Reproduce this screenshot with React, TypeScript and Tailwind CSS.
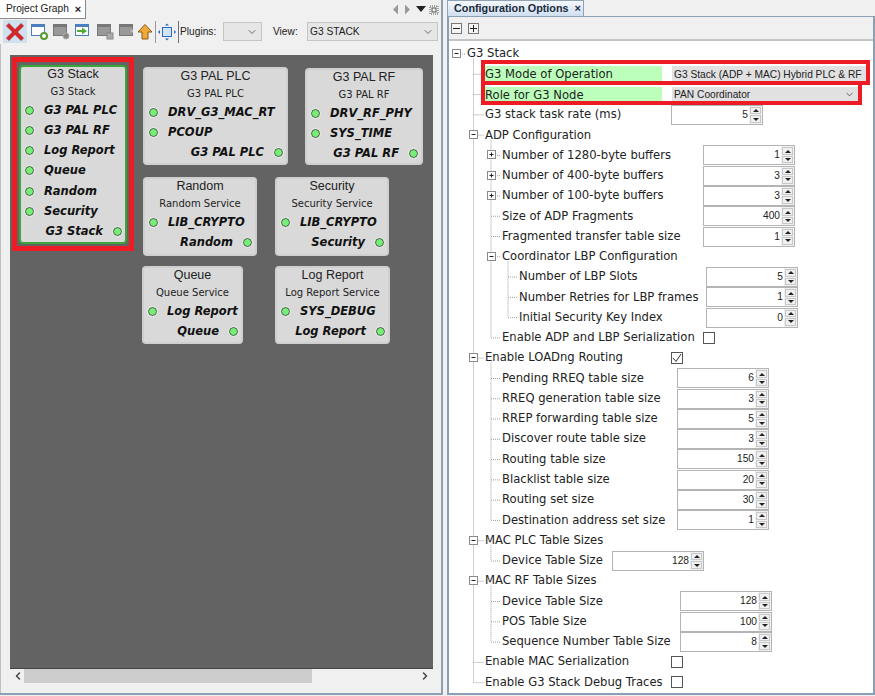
import { ChevronDown, ChevronLeft, ChevronRight } from "lucide-react";

const TREE_FONT = "font-['DejaVu_Sans',sans-serif] text-[11.6px] text-[#222]";
const WIN_FONT = "font-['Liberation_Sans',sans-serif] text-[10.2px] text-[#222]";

type Row = {
  label: string;
  level: 0 | 1 | 2 | 3;
  w?: string;
  spin?: string;
  check?: boolean;
  combo?: string;
  comboW?: string;
  highlight?: boolean;
};

const ROWS: Row[] = [
  { label: "G3 Stack", level: 0 },
  { label: "G3 Mode of Operation", level: 1, w: "w-[187px]", combo: "G3 Stack (ADP + MAC) Hybrid PLC & RF", comboW: "w-[194px]", highlight: true },
  { label: "Role for G3 Node", level: 1, w: "w-[187px]", combo: "PAN Coordinator", comboW: "w-[186px]", highlight: true },
  { label: "G3 stack task rate (ms)", level: 1, w: "w-[186px]", spin: "5" },
  { label: "ADP Configuration", level: 1 },
  { label: "Number of 1280-byte buffers", level: 2, w: "w-[201px]", spin: "1" },
  { label: "Number of 400-byte buffers", level: 2, w: "w-[201px]", spin: "3" },
  { label: "Number of 100-byte buffers", level: 2, w: "w-[201px]", spin: "3" },
  { label: "Size of ADP Fragments", level: 2, w: "w-[201px]", spin: "400" },
  { label: "Fragmented transfer table size", level: 2, w: "w-[201px]", spin: "1" },
  { label: "Coordinator LBP Configuration", level: 2 },
  { label: "Number of LBP Slots", level: 3, w: "w-[187px]", spin: "5" },
  { label: "Number Retries for LBP frames", level: 3, w: "w-[187px]", spin: "1" },
  { label: "Initial Security Key Index", level: 3, w: "w-[187px]", spin: "0" },
  { label: "Enable ADP and LBP Serialization", level: 2, w: "w-[201px]", check: false },
  { label: "Enable LOADng Routing", level: 1, w: "w-[186px]", check: true },
  { label: "Pending RREQ table size", level: 2, w: "w-[175px]", spin: "6" },
  { label: "RREQ generation table size", level: 2, w: "w-[175px]", spin: "3" },
  { label: "RREP forwarding table size", level: 2, w: "w-[175px]", spin: "5" },
  { label: "Discover route table size", level: 2, w: "w-[175px]", spin: "3" },
  { label: "Routing table size", level: 2, w: "w-[175px]", spin: "150" },
  { label: "Blacklist table size", level: 2, w: "w-[175px]", spin: "20" },
  { label: "Routing set size", level: 2, w: "w-[175px]", spin: "30" },
  { label: "Destination address set size", level: 2, w: "w-[175px]", spin: "1" },
  { label: "MAC PLC Table Sizes", level: 1 },
  { label: "Device Table Size", level: 2, w: "w-[110px]", spin: "128" },
  { label: "MAC RF Table Sizes", level: 1 },
  { label: "Device Table Size", level: 2, w: "w-[178px]", spin: "128" },
  { label: "POS Table Size", level: 2, w: "w-[178px]", spin: "100" },
  { label: "Sequence Number Table Size", level: 2, w: "w-[178px]", spin: "8" },
  { label: "Enable MAC Serialization", level: 1, w: "w-[186px]", check: false },
  { label: "Enable G3 Stack Debug Traces", level: 1, w: "w-[186px]", check: false },
];

const INDENT = { 0: "pl-[18px]", 1: "pl-[36px]", 2: "pl-[53px]", 3: "pl-[70px]" };

const rowY = (i: number) => 12.5 + i * 20.28;

function Spinner({ value }: { value: string }) {
  return (
    <div className="flex h-[20px] w-[92px] shrink-0 border border-[#b4b4b4] bg-white">
      <div className={`flex-1 pr-[1px] text-right leading-[18px] ${WIN_FONT}`}>{value}</div>
      <div className="flex w-[13px] flex-col gap-[1px] bg-[#f0f0f0] p-[1px]">
        <div className="flex flex-1 items-center justify-center border border-[#c8c8c8] bg-[#f0f0f0]">
          <div className="h-0 w-0 border-x-[3px] border-b-[3px] border-x-transparent border-b-[#222]" />
        </div>
        <div className="flex flex-1 items-center justify-center border border-[#c8c8c8] bg-[#f0f0f0]">
          <div className="h-0 w-0 border-x-[3px] border-t-[3px] border-x-transparent border-t-[#222]" />
        </div>
      </div>
    </div>
  );
}

function Check({ on }: { on: boolean }) {
  return (
    <div className="flex h-[12px] w-[12px] shrink-0 items-center justify-center border border-[#555] bg-white">
      {on && (
        <svg width="10" height="10" viewBox="0 0 10 10" fill="none">
          <path d="M1 5l3 3.5L9 1" stroke="#333" strokeWidth="1" />
        </svg>
      )}
    </div>
  );
}

function Combo({ text, w }: { text: string; w: string }) {
  return (
    <div className={`flex h-[16px] shrink-0 items-center justify-between bg-[#e1e1e1] pl-[2px] pr-[3px] ${w} ${WIN_FONT}`}>
      <span className="whitespace-nowrap">{text}</span>
      <ChevronDown size={11} strokeWidth={1.5} className="text-[#333]" />
    </div>
  );
}

// dotted connector lines and the +/- boxes of the tree
function TreeLines() {
  const verticals: [number, number, number][] = [
    [24.5, rowY(0) + 5, rowY(31)],
    [42, rowY(4) + 5, rowY(14)],
    [59, rowY(10) + 5, rowY(13)],
    [42, rowY(15) + 5, rowY(23)],
    [42, rowY(24) + 5, rowY(25)],
    [42, rowY(26) + 5, rowY(29)],
  ];
  const elbowX = { 0: 7, 1: 24.5, 2: 42, 3: 59 };
  const textX = { 0: 17, 1: 35, 2: 52, 3: 69 };
  const minus = [0, 4, 10, 15, 24, 26];
  const plus = [5, 6, 7];
  return (
    <svg className="pointer-events-none absolute left-0 top-0" width="120" height="660">
      {verticals.map(([x, a, b], i) => (
        <line key={i} x1={x} x2={x} y1={a} y2={b} stroke="#a0a0a0" strokeDasharray="1 1" />
      ))}
      {ROWS.map((r, i) => (
        <line key={i} x1={elbowX[r.level]} x2={textX[r.level]} y1={rowY(i) + 0.5} y2={rowY(i) + 0.5} stroke="#a0a0a0" strokeDasharray="1 1" />
      ))}
      {[...minus, ...plus].map((i) => {
        const x = Math.floor(elbowX[ROWS[i].level]) + 0.5;
        const y = Math.floor(rowY(i));
        return (
          <g key={i}>
            <rect x={x - 4} y={y - 3.5} width="8" height="8" fill="#fff" stroke="#8a8a8a" />
            <line x1={x - 2} x2={x + 2} y1={y + 0.5} y2={y + 0.5} stroke="#222" />
            {plus.includes(i) && <line x1={x} x2={x} y1={y - 1.5} y2={y + 2.5} stroke="#222" />}
          </g>
        );
      })}
    </svg>
  );
}

function ConfigPanel() {
  return (
    <div className="relative flex h-[695px] flex-1 flex-col">
      <div className="flex h-[16px] items-stretch">
        <div className="flex w-[137px] items-center gap-[6px] whitespace-nowrap border-x border-t border-[#8fa2b6] bg-gradient-to-b from-[#f4f8fc] to-[#cfdff0] pl-[6px] font-['Liberation_Sans',sans-serif] text-[10.8px] font-bold text-[#1a2a3a]">
          Configuration Options
          <span className="text-[11px] leading-none">×</span>
        </div>
      </div>
      <div className="flex flex-1 flex-col border-x-2 border-b-2 border-t border-[#8ca0b5]">
        <div className="flex h-[24px] items-center gap-[6px] border-b-2 border-[#c4c4c4] bg-[#f0f0f0] pl-[2px]">
          <div className="flex h-[11px] w-[11px] items-center justify-center border border-[#777] bg-[#f4f4f4]">
            <div className="h-[1px] w-[7px] bg-[#222]" />
          </div>
          <div className="relative flex h-[11px] w-[11px] items-center justify-center border border-[#777] bg-[#f4f4f4]">
            <div className="h-[1px] w-[7px] bg-[#222]" />
            <div className="absolute h-[7px] w-[1px] bg-[#222]" />
          </div>
        </div>
        <div className={`relative flex-1 bg-white pt-[3px] ${TREE_FONT}`}>
          <TreeLines />
          {ROWS.map((r, i) => (
            <div key={i} className={`flex h-[20.28px] items-center ${INDENT[r.level]}`}>
              <div className={`shrink-0 whitespace-nowrap ${r.w ?? ""} ${r.highlight ? "leading-[16px]" : ""}`}>
                {r.highlight ? <div className="w-[177px] bg-[#bbffbb]">{r.label}</div> : r.label}
              </div>
              {r.spin && <Spinner value={r.spin} />}
              {r.check !== undefined && <Check on={r.check} />}
              {r.combo && <Combo text={r.combo} w={r.comboW ?? ""} />}
            </div>
          ))}
          {/* red annotation boxes */}
          <div className="absolute left-[32px] top-[19px] h-[25px] w-[389px] border-[4px] border-[#ed1c24]" />
          <div className="absolute left-[32px] top-[44px] h-[20px] w-[381px] border-x-[4px] border-b-[4px] border-[#ed1c24]" />
        </div>
      </div>
    </div>
  );
}

function Port({ name, out }: { name: string; out?: boolean }) {
  const dot = <div className="h-[9px] w-[9px] shrink-0 rounded-full border border-[#3c5a3c] bg-[#78ee78] outline outline-1 outline-[#e8e8e8]" />;
  return (
    <div className={`flex h-[20.25px] items-center ${out ? "justify-end pr-[3px]" : "pl-[4px]"}`}>
      {!out && dot}
      <span className={`whitespace-nowrap font-['DejaVu_Sans',sans-serif] text-[11.5px] font-bold italic text-[#111] ${out ? "mr-[10px]" : "ml-[10px]"}`}>
        {name}
      </span>
      {out && dot}
    </div>
  );
}

function GraphNode({
  title,
  sub,
  inputs,
  output,
  className,
  selected,
}: {
  title: string;
  sub: string;
  inputs: string[];
  output: string;
  className: string;
  selected?: boolean;
}) {
  return (
    <div
      className={`absolute rounded-[4px] border-2 bg-[#d9d9d9] ${
        selected ? "border-[#3aa63a]" : "border-[#cfcfcf]"
      } ${className}`}
    >
      <div className="text-center font-['Liberation_Sans',sans-serif] text-[12.5px] leading-[15px] text-[#222]">{title}</div>
      <div className="mb-[1px] mt-[3px] text-center font-['DejaVu_Sans',sans-serif] text-[10px] leading-[14px] text-[#222]">{sub}</div>
      {inputs.map((p) => (
        <Port key={p} name={p} />
      ))}
      <Port name={output} out />
    </div>
  );
}

function WinIcon({ frame, badge }: { frame: string; badge: React.ReactNode }) {
  return (
    <svg width="20" height="18" viewBox="0 0 20 18" className="shrink-0">
      <rect x="1.5" y="1.5" width="13" height="11" fill={frame === "#777" ? "#999" : "#fff"} stroke={frame} />
      <rect x="1.5" y="1.5" width="13" height="2.5" fill={frame} />
      {badge}
    </svg>
  );
}

function Toolbar() {
  return (
    <div className={`flex h-[25px] shrink-0 items-center pl-[3px] ${WIN_FONT}`}>
      <div className="flex h-[23px] w-[24px] items-center justify-center bg-[#cfe0ef]">
        <svg width="22" height="22" viewBox="0 0 18 18">
          <path d="M2 4l2-2 5 5 5-5 2 2-5 5 5 5-2 2-5-5-5 5-2-2 5-5z" fill="#d8232a" stroke="#a81c20" strokeWidth="0.5" />
        </svg>
      </div>
      <div className="ml-[3px] flex items-center gap-[2px]">
        <WinIcon frame="#4a7fc0" badge={<circle cx="14" cy="13" r="3" fill="#fff" stroke="#5a9a30" strokeWidth="2" />} />
        <WinIcon frame="#777" badge={<circle cx="14" cy="13" r="3" fill="#888" stroke="#aaa" />} />
        <WinIcon frame="#4a7fc0" badge={<path d="M3 7h5V4.5L13 8l-5 3.5V9H3z" fill="#4caf30" />} />
        <WinIcon frame="#777" badge={<rect x="11" y="10" width="6" height="6" fill="#aaa" stroke="#888" />} />
        <WinIcon frame="#777" badge={<path d="M12 8l3-2v4z" fill="#bbb" />} />
      </div>
      <svg width="14" height="18" viewBox="2 0 14 18" className="shrink-0">
        <path d="M9 1.5L16 9h-4v7H6V9H2z" fill="#f0a83c" stroke="#8a5a14" />
      </svg>
      <div className="ml-[3px] h-[22px] w-[1px] bg-[#9a9a9a]" />
      <svg width="20" height="18" viewBox="0 0 20 18" className="ml-[1px] shrink-0">
        <rect x="5.5" y="4.5" width="9" height="9" fill="#cfe4fa" stroke="#2a6cc0" />
        <path d="M10 0.5l2 2H8zM10 17.5l2-2H8zM1 9l2-2v4zM19 9l-2-2v4z" fill="#2a6cc0" />
      </svg>
      <div className="ml-[1px] h-[22px] w-[1px] bg-[#707070]" />
      <span className="ml-[1px] w-[33px] whitespace-nowrap">Plugins:</span>
      <div className="ml-[10px] flex h-[19px] w-[39px] items-center justify-end border border-[#c4c4c4] bg-[#e6e6e6] pr-[3px]">
        <ChevronDown size={12} strokeWidth={1.5} className="text-[#444]" />
      </div>
      <span className="ml-[11px] w-[24px]">View:</span>
      <div className="ml-[10px] flex h-[19px] w-[131px] items-center justify-between border border-[#c4c4c4] bg-[#e6e6e6] pl-[2px] pr-[3px]">
        <span>G3 STACK</span>
        <ChevronDown size={12} strokeWidth={1.5} className="text-[#444]" />
      </div>
    </div>
  );
}

function GraphPanel() {
  return (
    <div className="flex h-[695px] w-[443px] shrink-0 flex-col border-b-2 border-r-2 border-[#8ca0b5]">
      <div className="relative flex h-[19px] shrink-0 items-stretch">
        <div className={`flex w-[86px] items-center gap-[6px] whitespace-nowrap border-b border-r border-[#8a8a8a] bg-white pl-[6px] ${WIN_FONT}`}>
          Project Graph
          <span className="text-[11px] font-bold leading-none">×</span>
        </div>
        <div className="ml-auto flex items-center gap-[1px] pr-[1px] text-[#666]">
          <svg width="10" height="11" viewBox="0 0 10 11"><path d="M7 0.5v10L2 5.5z" fill="#999" /></svg>
          <svg width="10" height="11" viewBox="0 0 10 11"><path d="M3 0.5v10L8 5.5z" fill="#999" /></svg>
          <svg width="12" height="11" viewBox="0 0 12 11" className="ml-[2px]"><path d="M1 2h10L6 8z" fill="#222" /></svg>
          <svg width="12" height="11" viewBox="0 0 12 11"><rect x="2" y="2" width="8" height="8" fill="none" stroke="#555" strokeDasharray="1 1" /><rect x="4" y="4" width="4" height="4" fill="none" stroke="#555" /></svg>
        </div>
      </div>
      <Toolbar />
      <div className="flex flex-1 flex-col border-l border-[#c0c0c0] pl-[9px] pr-[8px] pt-[11px]">
        <div className="relative h-[614px] w-[423px] border-b border-[#444] bg-[#636363]">
          <div className="absolute left-[2px] top-[2px] h-[194px] w-[122px] border-[5px] border-[#ed1c24]" />
          <GraphNode
            selected
            title="G3 Stack"
            sub="G3 Stack"
            inputs={["G3 PAL PLC", "G3 PAL RF", "Log Report", "Queue", "Random", "Security"]}
            output="G3 Stack"
            className="left-[9px] top-[10px] h-[179px] w-[108px]"
          />
          <GraphNode title="G3 PAL PLC" sub="G3 PAL PLC" inputs={["DRV_G3_MAC_RT", "PCOUP"]} output="G3 PAL PLC" className="left-[133px] top-[12px] h-[98px] w-[145px]" />
          <GraphNode title="G3 PAL RF" sub="G3 PAL RF" inputs={["DRV_RF_PHY", "SYS_TIME"]} output="G3 PAL RF" className="left-[295px] top-[13px] h-[97px] w-[118px]" />
          <GraphNode title="Random" sub="Random Service" inputs={["LIB_CRYPTO"]} output="Random" className="left-[133px] top-[122px] h-[79px] w-[114px]" />
          <GraphNode title="Security" sub="Security Service" inputs={["LIB_CRYPTO"]} output="Security" className="left-[265px] top-[122px] h-[79px] w-[114px]" />
          <GraphNode title="Queue" sub="Queue Service" inputs={["Log Report"]} output="Queue" className="left-[132px] top-[211px] h-[78px] w-[101px]" />
          <GraphNode title="Log Report" sub="Log Report Service" inputs={["SYS_DEBUG"]} output="Log Report" className="left-[265px] top-[211px] h-[78px] w-[115px]" />
        </div>
        <div className="flex h-[14px] items-center bg-[#f0f0f0] px-[2px]">
          <ChevronLeft size={12} strokeWidth={3} className="text-[#444]" />
          <div className="h-full w-[288px] bg-[#cccccc]" />
          <ChevronRight size={12} strokeWidth={3} className="ml-auto text-[#444]" />
        </div>
      </div>
    </div>
  );
}

export default function App() {
  return (
    <div className="flex h-[696px] w-[875px] gap-[4px] overflow-hidden bg-[#f0f0f0]">
      <GraphPanel />
      <ConfigPanel />
    </div>
  );
}
